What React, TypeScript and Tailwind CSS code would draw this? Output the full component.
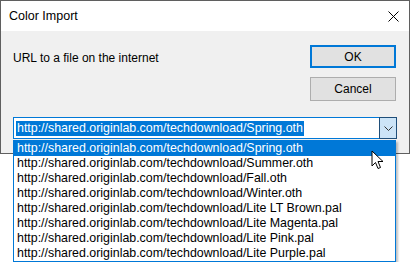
import React from 'react'

const base = 'http://shared.originlab.com/techdownload/'
const items = [
  'Spring.oth',
  'Summer.oth',
  'Fall.oth',
  'Winter.oth',
  'Lite LT Brown.pal',
  'Lite Magenta.pal',
  'Lite Pink.pal',
  'Lite Purple.pal',
]

const font = { fontFamily: '"Liberation Sans", Arial, sans-serif' }

function Cursor() {
  return (
    <svg width="14" height="21" viewBox="0 0 14 21" className="absolute left-[371px] top-[150px]">
      <path
        d="M1 1 L1 16 L4.5 12.5 L7 18.5 L9.5 17.5 L7 11.5 L12 11.5 Z"
        fill="#ffffff"
        stroke="#000000"
        strokeWidth="1"
        strokeLinejoin="round"
      />
    </svg>
  )
}

export default function App() {
  return (
    <div className="relative w-[410px] h-[262px] bg-white overflow-hidden text-[12px] text-black" style={font}>
      <div className="flex flex-col w-[410px] h-[154px] border border-[#5f5f5f]">
        <div className="flex items-center justify-between h-[30px] bg-white pl-[8px] pr-[10px]">
          <span className="text-[12.5px]">Color Import</span>
          <svg width="11" height="11" viewBox="0 0 11 11">
            <path d="M0.5 0.5 L10.5 10.5 M10.5 0.5 L0.5 10.5" stroke="#000" strokeWidth="1" />
          </svg>
        </div>
        <div className="flex-1 bg-[#f0f0f0] flex flex-col px-[12px]">
          <div className="flex justify-between pt-[14px]">
            <span className="pt-[4px]">URL to a file on the internet</span>
            <div className="flex flex-col gap-[9px] pr-[1px]">
              <button className="w-[86px] h-[23px] bg-[#e1e1e1] border-2 border-[#0078d7] leading-none">OK</button>
              <button className="w-[86px] h-[24px] bg-[#e1e1e1] border border-[#adadad] leading-none">Cancel</button>
            </div>
          </div>
          <div className="mt-[16px] flex h-[22px] w-[384px] border border-[#0078d7] bg-white text-[12.4px]">
            <div className="flex-1 flex items-center pl-[2px]">
              <span className="bg-[#0078d7] text-white leading-[15px] px-[1px]">{base + items[0]}</span>
            </div>
            <div className="w-[18px] h-[22px] -my-px -mr-px flex items-center justify-center bg-[#cce4f7] border border-[#1f4e79]">
              <svg width="9" height="5" viewBox="0 0 9 5">
                <path d="M0.5 0.5 L4.5 4.5 L8.5 0.5" fill="none" stroke="#333" strokeWidth="1" />
              </svg>
            </div>
          </div>
        </div>
      </div>
      <div className="absolute left-[13px] top-[140px] w-[383px] h-[122px] border border-[#0078d7] bg-white flex flex-col text-[12.4px] shadow-[2px_2px_2px_rgba(0,0,0,0.25)]">
        {items.map((it, i) => (
          <div
            key={it}
            className={`h-[15px] leading-[15px] pl-[3px] whitespace-nowrap ${i === 0 ? 'bg-[#0078d7] text-white' : 'text-black'}`}
          >
            {base + it}
          </div>
        ))}
      </div>
      <Cursor />
    </div>
  )
}
